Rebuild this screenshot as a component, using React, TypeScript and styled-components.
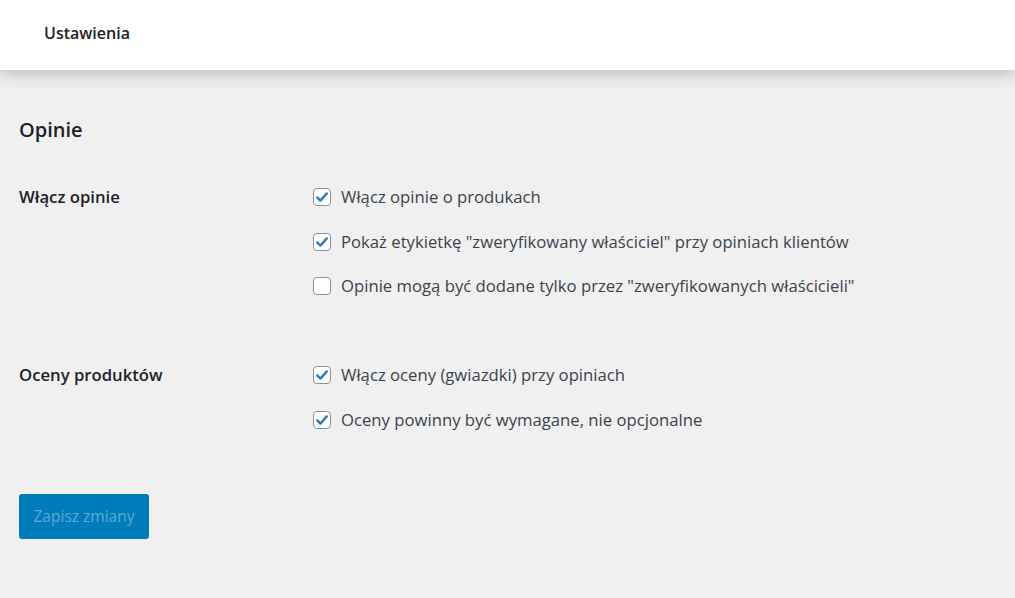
import styled, { createGlobalStyle } from "styled-components";

const GlobalStyle = createGlobalStyle`
  html, body {
    margin: 0;
    padding: 0;
    background: #f0f0f1;
    font-family: "Open Sans", "Noto Sans", sans-serif;
    color: #1e1e1e;
  }
`;

type Option = { label: string; checked: boolean };
type Group = { title: string; options: Option[] };

const groups: Group[] = [
  {
    title: "Włącz opinie",
    options: [
      { label: "Włącz opinie o produkach", checked: true },
      { label: 'Pokaż etykietkę "zweryfikowany właściciel" przy opiniach klientów', checked: true },
      { label: 'Opinie mogą być dodane tylko przez "zweryfikowanych właścicieli"', checked: false },
    ],
  },
  {
    title: "Oceny produktów",
    options: [
      { label: "Włącz oceny (gwiazdki) przy opiniach", checked: true },
      { label: "Oceny powinny być wymagane, nie opcjonalne", checked: true },
    ],
  },
];

const Check = ({ checked }: { checked: boolean }) => (
  <Box>
    {checked && (
      <svg width="14" height="14" viewBox="0 0 14 14">
        <path d="M2.2 7.4 L5.4 10.6 L11.8 3.4" fill="none" stroke="#2f7bc0" strokeWidth="2.4" strokeLinecap="round" strokeLinejoin="round" />
      </svg>
    )}
  </Box>
);

const App = () => {
  return (
    <Page>
      <GlobalStyle />
      <Header>
        <HeaderTitle>Ustawienia</HeaderTitle>
      </Header>
      <Content>
        <SectionTitle>Opinie</SectionTitle>
        {groups.map((g) => (
          <Row key={g.title}>
            <RowLabel>{g.title}</RowLabel>
            <Options>
              {g.options.map((o) => (
                <OptionLine key={o.label}>
                  <Check checked={o.checked} />
                  <span>{o.label}</span>
                </OptionLine>
              ))}
            </Options>
          </Row>
        ))}
        <SaveButton disabled>Zapisz zmiany</SaveButton>
      </Content>
    </Page>
  );
};

const Page = styled.div`
  min-height: 598px;
  background: #f0f0f1;
`;

const Header = styled.div`
  height: 70px;
  background: #fff;
  display: flex;
  align-items: center;
  padding-left: 44px;
  box-shadow: 0 3px 16px rgba(0, 0, 0, 0.24);
  position: relative;
  z-index: 1;
`;

const HeaderTitle = styled.h1`
  margin: 0;
  font-size: 16px;
  font-weight: 600;
  color: #1d2327;
  transform: translateY(-2px);
`;

const Content = styled.div`
  padding: 46px 19px 0 19px;
  display: flex;
  flex-direction: column;
`;

const SectionTitle = styled.h2`
  margin: 0 0 40px;
  font-size: 20px;
  font-weight: 600;
  color: #1d2327;
  line-height: 28px;
`;

const Row = styled.div`
  display: grid;
  grid-template-columns: 294px 1fr;
  margin-bottom: 63px;
  &:last-of-type {
    margin-bottom: 61px;
  }
`;

const RowLabel = styled.div`
  font-size: 16.7px;
  font-weight: 600;
  color: #1d2327;
  line-height: 26px;
`;

const Options = styled.div`
  display: flex;
  flex-direction: column;
  gap: 18.5px;
`;

const OptionLine = styled.label`
  display: flex;
  align-items: center;
  gap: 10px;
  font-size: 16.7px;
  color: #3c434a;
  line-height: 26px;
`;

const Box = styled.span`
  width: 18px;
  height: 18px;
  box-sizing: border-box;
  border: 1px solid #8c8f94;
  border-radius: 4px;
  background: #fff;
  display: flex;
  align-items: center;
  justify-content: center;
  flex-shrink: 0;
`;

const SaveButton = styled.button`
  align-self: flex-start;
  width: 130px;
  height: 45px;
  border: none;
  border-radius: 3px;
  background: #007cba;
  color: #5fa9d5;
  font-family: inherit;
  font-size: 15.5px;
`;

export default App;
